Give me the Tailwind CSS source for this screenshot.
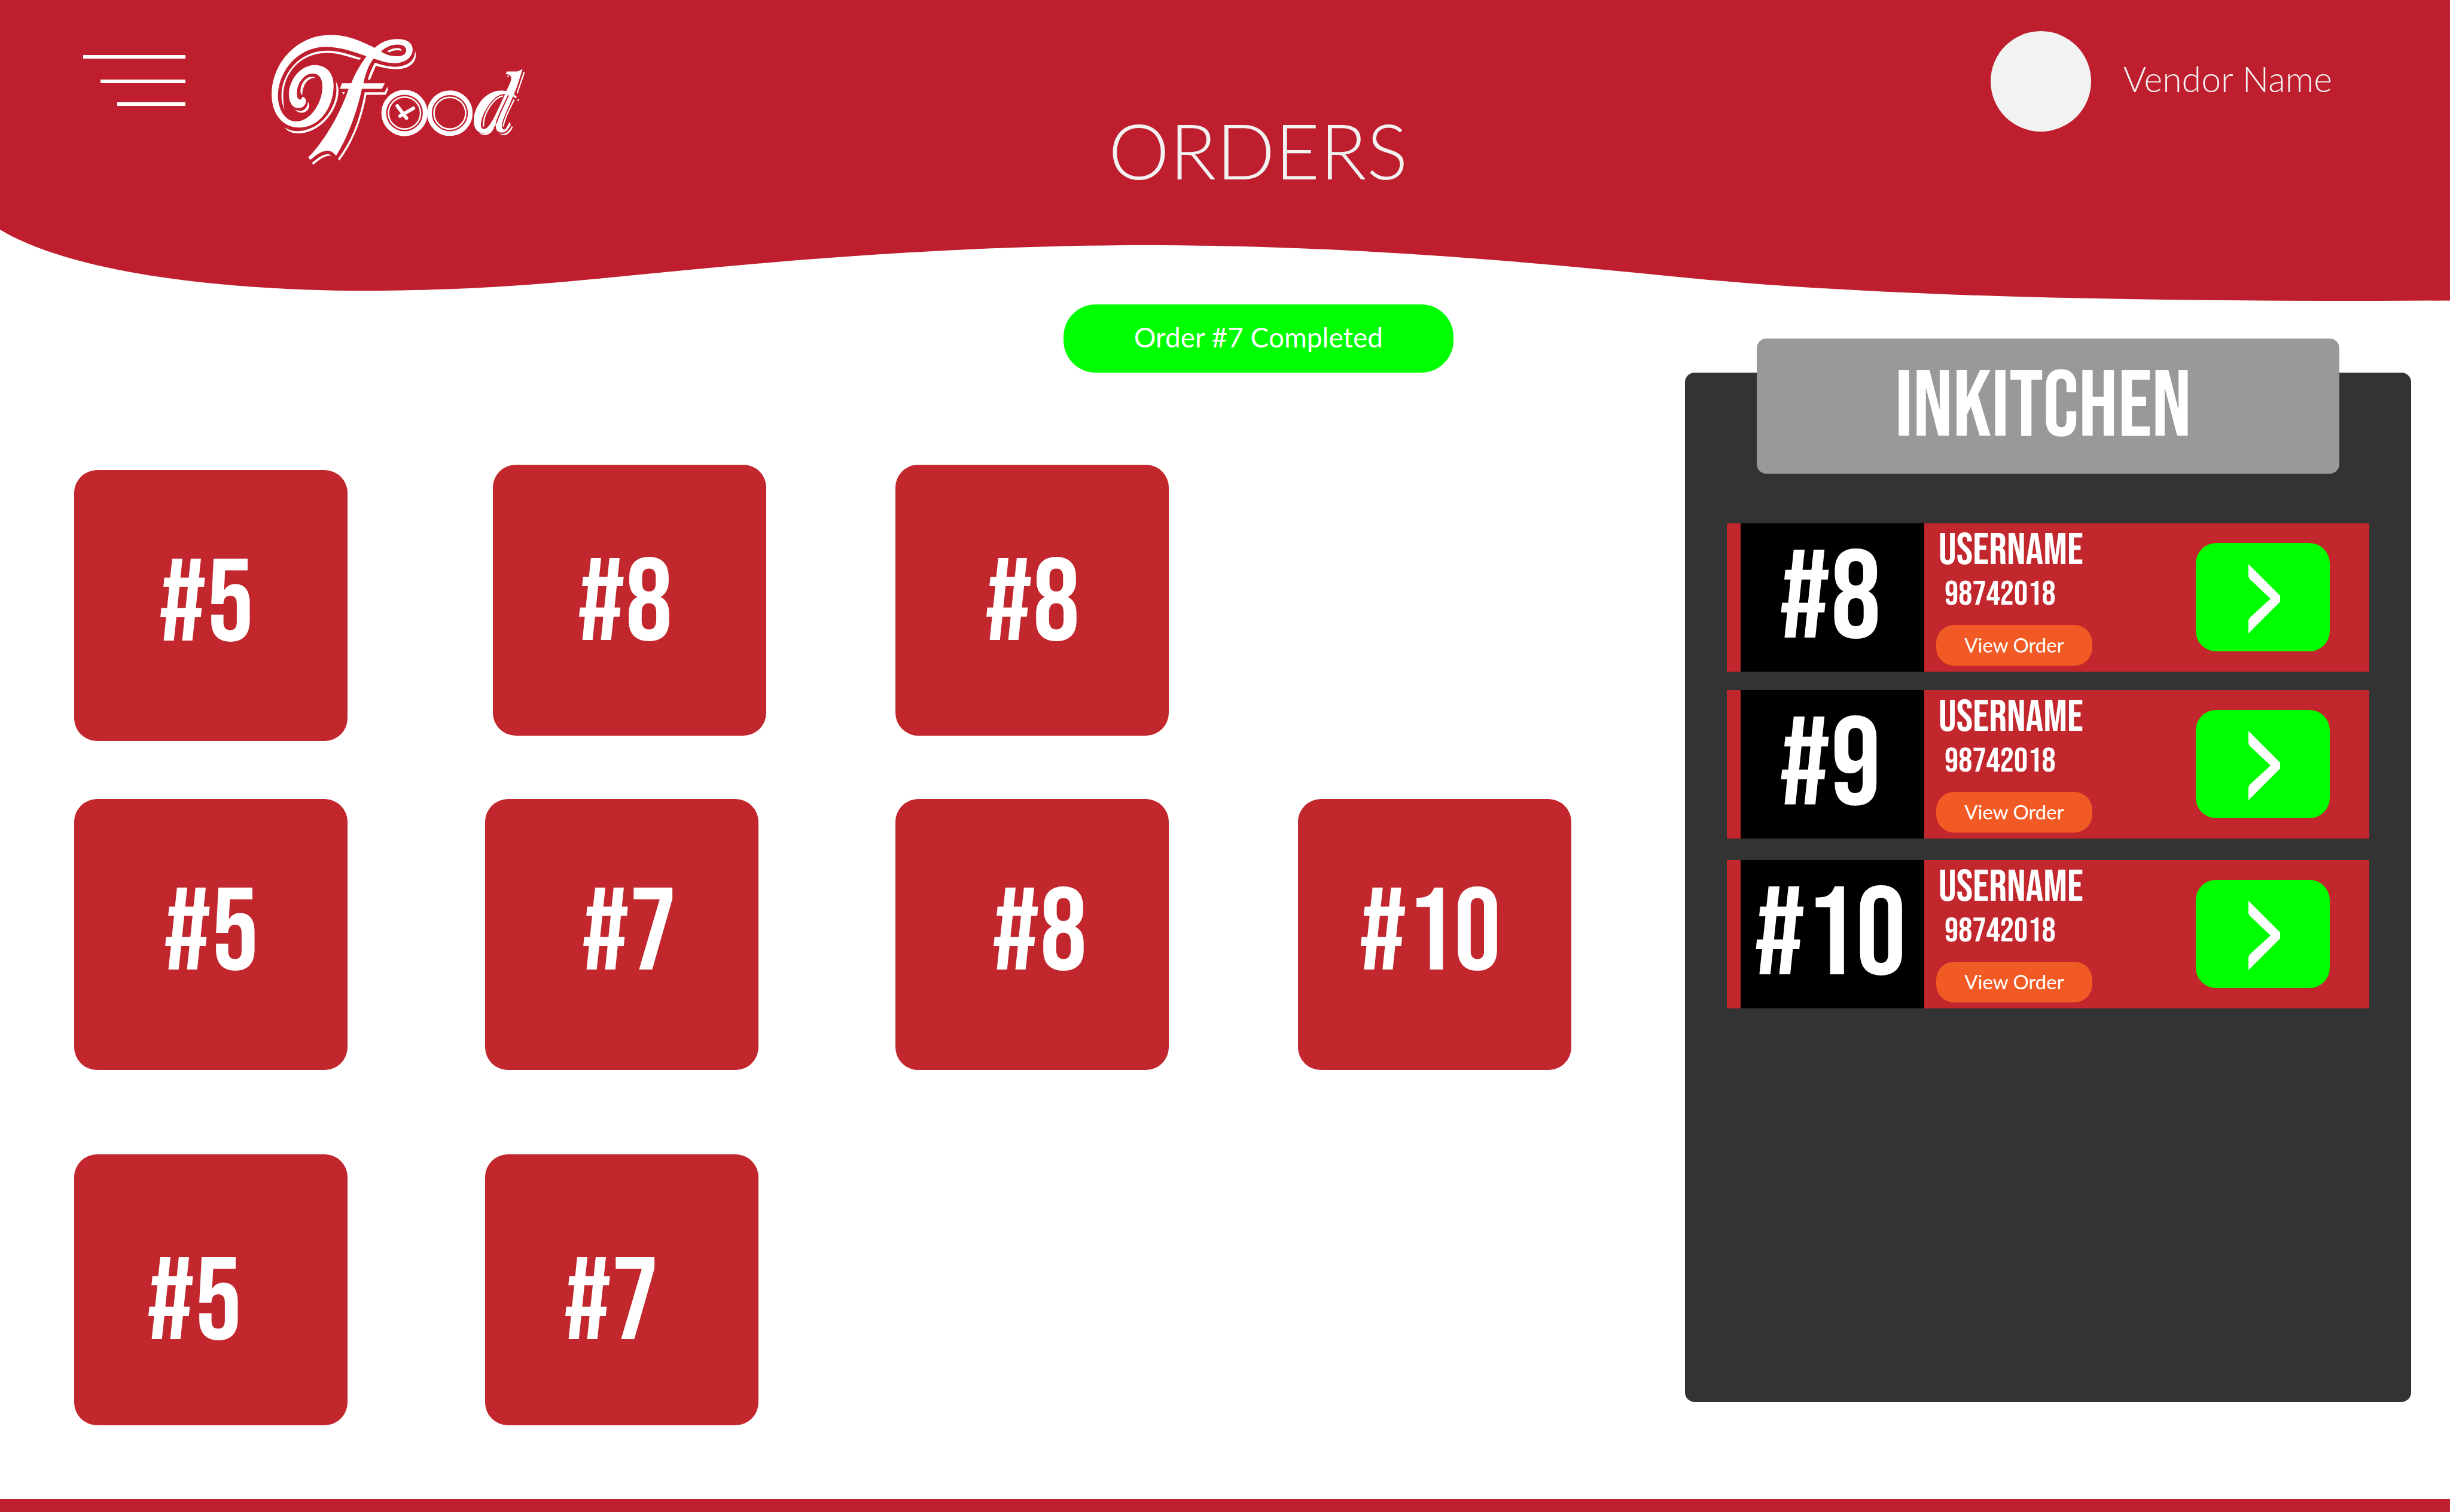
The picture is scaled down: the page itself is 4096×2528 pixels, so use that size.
<!DOCTYPE html>
<html lang="en">
<head>
<meta charset="utf-8">
<meta name="viewport" content="width=device-width, initial-scale=1">
<title>Orders</title>
<script src="https://cdn.jsdelivr.net/npm/@tailwindcss/browser@4"></script>
</head>
<body class="flex min-h-screen flex-col bg-white font-['Lato',sans-serif] text-white">

<header class="relative h-[503px]">
  <svg class="absolute inset-0 h-full w-full" viewBox="0 0 4096 503" preserveAspectRatio="none" aria-hidden="true">
    <path fill="#be1e2d" d="M0 0V384C110 450 340 486 614 486C770 486 900 476 1045 461.500C1330 433 1610 410 1915 410C2230 410 2520 434 2795 462C3140 497 3560 503 3970 503L4096 502.500V0Z"/>
  </svg>
  <div class="relative flex items-start text-[#f2f2f2]">
    <button type="button" aria-label="Menu" class="mt-[92px] ml-[139px] flex w-[171px] flex-col items-end">
      <span class="h-[6px] w-full bg-white"></span>
      <span class="mt-[35px] h-[6px] w-[142px] bg-white"></span>
      <span class="mt-[32px] h-[6px] w-[114px] bg-white"></span>
    </button>
    <a href="#" aria-label="Food" class="mt-[49px] ml-[137px] block">
      <svg class="h-[235px] w-[432px]" viewBox="0 0 1709 930" fill="#fff" aria-hidden="true">
        <!-- swash -->
        <path fill-rule="evenodd" d="M710 123C600 70 530 38 415 38C190 38 28 230 28 430C28 560 100 650 212 650C350 650 438 510 438 370C438 290 390 236 316 236C215 236 142 340 142 430C142 480 165 521 205 521C235 521 255 500 255 475C255 460 245 448 231 446C228 460 220 466 213 465C200 460 195 445 195 420C195 360 240 293 300 293C345 293 364 330 364 380C364 480 290 609 190 609C110 609 70 520 70 440C70 290 190 117 385 117C490 117 570 150 655 178C615 235 580 290 555 357L493 357L480 394L537 394C490 540 380 740 270 847L283 864C310 845 350 803 398 803C430 803 440 825 454 836C520 740 590 560 625 394L757 394L777 357L635 357C650 290 670 235 702 194C740 205 780 224 845 224C910 224 961 185 961 135C961 90 925 64 860 64C800 64 750 85 710 123ZM752 146C780 120 820 101 862 101C900 101 918 118 918 140C918 162 895 178 860 178C820 178 780 168 752 146Z"/>
        <!-- inline and drop lines of the swash -->
        <path d="M620 190L607 202C530 180 470 156 395 156C210 156 105 300 105 440C105 480 108 510 115 535C98 500 93 470 93 440C93 290 215 141 395 141C480 141 550 170 620 190Z"/>
        <path d="M318 322C270 318 232 365 230 436C218 425 219 415 219 405C222 350 260 314 295 314C305 315 313 318 318 322Z"/>
        <path d="M182 530C225 552 265 535 268 478C280 500 278 520 264 535C245 558 205 558 182 530Z"/>
        <path d="M112 648C150 672 180 675 205 674C280 670 360 630 415 540C455 470 462 420 453 345C465 370 470 380 470 410C465 545 350 680 215 689C170 690 140 680 112 648Z"/>
        <path d="M792 147C810 130 840 125 860 125C875 125 888 130 888 142C860 135 830 138 808 152Z"/>
        <path d="M711 221C750 235 800 248 845 248C920 245 975 215 977 142C990 185 975 215 950 235C910 268 830 275 718 240L679 333L664 333C675 295 690 260 711 221Z"/>
        <path d="M493 416L513 416L503 432Z"/>
        <path d="M644 417L775 417L794 381L798 398L783 433L655 433C625 600 560 760 475 869L467 857C560 735 610 600 644 417Z"/>
        <path d="M296 882C330 855 365 825 400 827C412 828 420 832 422 836C375 835 340 865 302 897Z"/>
        <!-- plates and cutlery -->
        <g fill="none" stroke="#fff">
          <circle cx="907" cy="554" r="137" stroke-width="32"/>
          <circle cx="907" cy="554" r="106" stroke-width="10"/>
          <circle cx="1207" cy="555" r="135" stroke-width="31"/>
          <circle cx="1207" cy="555" r="105" stroke-width="10"/>
          <path stroke-width="23" stroke-linecap="round" d="M859 507L920 588M966 522L877 574"/>
        </g>
        <!-- tail stroke -->
        <g transform="translate(720 225)">
          <path fill-rule="evenodd" d="M856 72L865 54L920 54C945 54 950 45 968 38C950 95 935 150 911 205L930 222L925 233L905 218C885 270 840 360 833 400C828 420 835 438 845 438C860 438 870 410 882 387L890 405C875 440 855 458 835 458C800 458 788 440 791 405C770 440 740 462 710 462C670 462 645 430 645 380C645 290 720 181 825 181C840 181 852 182 862 184C880 140 893 120 893 100C893 80 880 72 856 72ZM852 204C790 200 735 280 705 350C685 400 690 435 712 435C750 435 790 340 852 204Z"/>
          <path fill="none" stroke="#be1e2d" stroke-width="8" d="M874 212C850 270 810 335 793 398"/>
          <path fill="none" stroke="#fff" stroke-width="9" d="M838 216C780 225 705 330 709 418M912 240C890 290 850 350 840 418"/>
          <path d="M975 55L983 62L935 202L928 198ZM939 235L946 242L938 252L933 244ZM864 82C872 80 880 84 881 91C872 92 866 88 864 82ZM675 460C715 475 760 455 780 412L778 430C755 480 710 485 675 460ZM812 463C850 480 880 450 898 414L903 424C880 475 840 488 812 463Z"/>
        </g>
      </svg>
    </a>
    <h1 class="mt-[173px] flex-1 text-center text-[129px] leading-[154px] font-light">ORDERS</h1>
    <div class="mt-[52px] mr-[197px] flex items-center gap-[54px]">
      <span class="size-[168px] rounded-full bg-[#f2f2f2]"></span>
      <span class="pb-2 text-[59px] leading-[70px] font-light">Vendor Name</span>
    </div>
  </div>
</header>

<main class="grid flex-1 grid-cols-[2817fr_1214fr_65fr] items-start font-['Bebas_Neue','Open_Sans_Condensed',sans-serif]">
  <section aria-label="Orders" class="flex flex-col pt-[6px] pb-[122px] pl-[124px]">
    <p role="status" class="mr-[387px] self-end rounded-[54px] bg-[#00ff00] px-[118px] pt-[28px] pb-[32px] font-['Lato',sans-serif] text-[46px] leading-[54px]">Order #7 Completed</p>

    <div class="mt-[154px] grid grid-cols-[700fr_673fr_673fr_647fr] items-start text-[196px] leading-[196px]">
      <button type="button" class="mt-[9px] h-[453px] w-[457px] rounded-[38px] bg-[#c1272d] pr-4">#5</button>
      <button type="button" class="h-[453px] w-[457px] rounded-[38px] bg-[#c1272d] pt-4 pr-4">#8</button>
      <button type="button" class="h-[453px] w-[457px] rounded-[38px] bg-[#c1272d] pt-4">#8</button>
    </div>

    <div class="mt-[97px] grid grid-cols-[687fr_686fr_673fr_647fr] items-start text-[196px] leading-[196px]">
      <button type="button" class="h-[453px] w-[457px] rounded-[38px] bg-[#c1272d]">#5</button>
      <button type="button" class="h-[453px] w-[457px] rounded-[38px] bg-[#c1272d] pl-6">#7</button>
      <button type="button" class="h-[453px] w-[457px] rounded-[38px] bg-[#c1272d] pl-6">#8</button>
      <button type="button" class="h-[453px] w-[457px] rounded-[38px] bg-[#c1272d] pr-4">#10</button>
    </div>

    <div class="mt-[141px] grid grid-cols-[687fr_686fr_673fr_647fr] items-start text-[196px] leading-[196px]">
      <button type="button" class="h-[453px] w-[457px] rounded-[38px] bg-[#c1272d] pt-12 pr-14">#5</button>
      <button type="button" class="h-[453px] w-[457px] rounded-[38px] bg-[#c1272d] pt-12 pr-9">#7</button>
    </div>
  </section>

  <aside class="mt-[120px] min-h-[1721px] rounded-[16px] bg-[#333]">
    <h2 class="mx-[120px] -mt-[57px] rounded-[16px] bg-[#999] pt-[40px] pr-4 pb-[34px] text-center text-[156px] leading-[152px]">INKITCHEN</h2>

    <ul class="mx-[70px] mt-[83px]">
      <li class="flex h-[248px] items-start bg-[#c1272d] pl-[23px]">
        <span class="flex h-full w-[307px] items-center justify-center bg-black pt-2 pr-2 text-[210px] leading-[210px]">#8</span>
        <div class="ml-5 flex flex-1 flex-col items-start">
          <span class="mt-2.5 pl-1 text-[74px] leading-[72px]">Username</span>
          <span class="pl-3.5 text-[58px] leading-[74px]">98742018</span>
          <button type="button" class="mt-[14px] h-[68px] w-[261px] rounded-[30px] bg-[#f15a24] font-['Lato',sans-serif] text-[33px]">View Order</button>
        </div>
        <button type="button" aria-label="Complete order 8" class="mt-[33px] mr-[66px] flex h-[181px] w-[224px] items-center justify-center rounded-[34px] bg-[#00ff00] pt-1 pl-1">
          <svg class="h-[116px] w-[53px]" viewBox="0 0 53 116" fill="#fff" aria-hidden="true"><path d="M0 0L53 53V63L0 116V94L2 90L37 58L2 25L0 21Z"/></svg>
        </button>
      </li>
      <li class="mt-[31px] flex h-[248px] items-start bg-[#c1272d] pl-[23px]">
        <span class="flex h-full w-[307px] items-center justify-center bg-black pt-2 pr-2 text-[210px] leading-[210px]">#9</span>
        <div class="ml-5 flex flex-1 flex-col items-start">
          <span class="mt-2.5 pl-1 text-[74px] leading-[72px]">Username</span>
          <span class="pl-3.5 text-[58px] leading-[74px]">98742018</span>
          <button type="button" class="mt-[14px] h-[68px] w-[261px] rounded-[30px] bg-[#f15a24] font-['Lato',sans-serif] text-[33px]">View Order</button>
        </div>
        <button type="button" aria-label="Complete order 9" class="mt-[33px] mr-[66px] flex h-[181px] w-[224px] items-center justify-center rounded-[34px] bg-[#00ff00] pt-1 pl-1">
          <svg class="h-[116px] w-[53px]" viewBox="0 0 53 116" fill="#fff" aria-hidden="true"><path d="M0 0L53 53V63L0 116V94L2 90L37 58L2 25L0 21Z"/></svg>
        </button>
      </li>
      <li class="mt-9 flex h-[248px] items-start bg-[#c1272d] pl-[23px]">
        <span class="flex h-full w-[307px] items-center justify-center bg-black pt-2 pr-2 text-[210px] leading-[210px]">#10</span>
        <div class="ml-5 flex flex-1 flex-col items-start">
          <span class="mt-2.5 pl-1 text-[74px] leading-[72px]">Username</span>
          <span class="pl-3.5 text-[58px] leading-[74px]">98742018</span>
          <button type="button" class="mt-[14px] h-[68px] w-[261px] rounded-[30px] bg-[#f15a24] font-['Lato',sans-serif] text-[33px]">View Order</button>
        </div>
        <button type="button" aria-label="Complete order 10" class="mt-[33px] mr-[66px] flex h-[181px] w-[224px] items-center justify-center rounded-[34px] bg-[#00ff00] pt-1 pl-1">
          <svg class="h-[116px] w-[53px]" viewBox="0 0 53 116" fill="#fff" aria-hidden="true"><path d="M0 0L53 53V63L0 116V94L2 90L37 58L2 25L0 21Z"/></svg>
        </button>
      </li>
    </ul>
  </aside>
</main>

<footer class="h-[22px] bg-[#be1e2d]"></footer>
</body>
</html>
